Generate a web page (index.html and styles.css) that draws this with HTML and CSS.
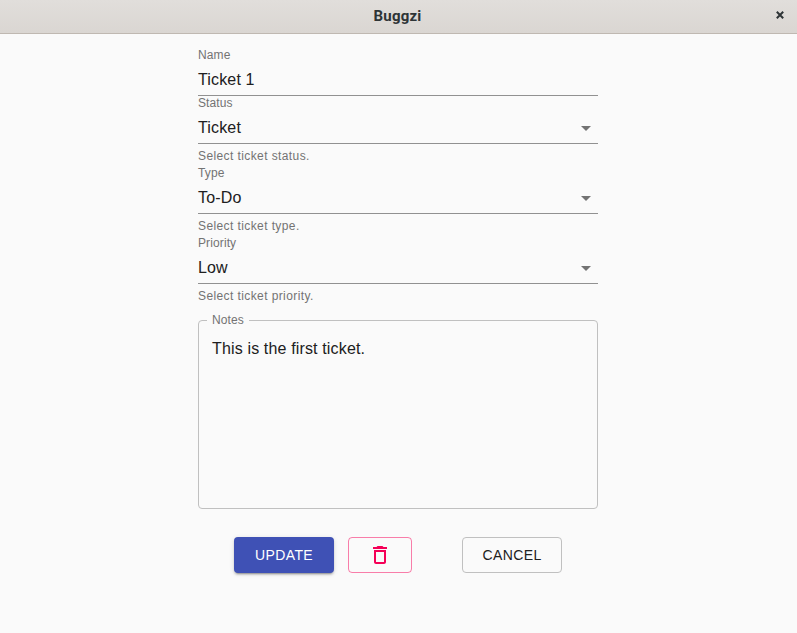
FILE: index.html
```html
<!DOCTYPE html>
<html lang="en">
<head>
<meta charset="utf-8">
<title>Buggzi</title>
<link rel="stylesheet" href="styles.css">
</head>
<body>
<header class="titlebar">
  <h1 class="title">Buggzi</h1>
  <button class="close" aria-label="Close"><svg width="8" height="8" viewBox="0 0 8 8"><path d="M.8.8l6.400 6.400M7.200.8L.8 7.200" stroke="#2e3436" stroke-width="2"/></svg></button>
</header>
<main class="form">
  <div class="field">
    <span class="label">Name</span>
    <div class="value">Ticket 1</div>
  </div>
  <div class="field">
    <span class="label">Status</span>
    <div class="value">Ticket<svg class="arrow" viewBox="0 0 24 24"><path d="M7 10l5 5 5-5z"/></svg></div>
    <p class="help">Select ticket status.</p>
  </div>
  <div class="field">
    <span class="label">Type</span>
    <div class="value">To-Do<svg class="arrow" viewBox="0 0 24 24"><path d="M7 10l5 5 5-5z"/></svg></div>
    <p class="help">Select ticket type.</p>
  </div>
  <div class="field">
    <span class="label">Priority</span>
    <div class="value">Low<svg class="arrow" viewBox="0 0 24 24"><path d="M7 10l5 5 5-5z"/></svg></div>
    <p class="help">Select ticket priority.</p>
  </div>
  <fieldset class="notes">
    <legend class="legend">Notes</legend>
    <div class="text">This is the first ticket.</div>
  </fieldset>
  <div class="actions">
    <button class="btn primary">UPDATE</button>
    <button class="btn delete" aria-label="Delete"><svg width="24" height="24" viewBox="0 0 24 24"><path d="M6 19c0 1.100.9 2 2 2h8c1.100 0 2-.9 2-2V7H6v12zM8 9h8v10H8V9zm7.500-5l-1-1h-5l-1 1H5v2h14V4z"/></svg></button>
    <button class="btn cancel">CANCEL</button>
  </div>
</main>
</body>
</html>
```
FILE: styles.css
```css
* { box-sizing: border-box; }
body {
  margin: 0;
  height: 633px;
  overflow: hidden;
  background: #fafafa;
  color: #202020;
  font-family: "Liberation Sans", Arial, sans-serif;
}
button { font-family: inherit; margin: 0; padding: 0; }
.titlebar {
  display: grid;
  grid-template-columns: 34px 1fr 34px;
  align-items: center;
  height: 34px;
  background: linear-gradient(#e1dedb, #dad6d2);
  border-bottom: 1px solid #bfb8b1;
}
.title {
  grid-column: 2;
  margin: 0 2px 1px 0;
  text-align: center;
  font: bold 15px/30px Roboto, sans-serif;
  letter-spacing: .2px;
  color: #2e3436;
}
.close { display: flex; justify-content: center; border: 0; background: none; padding-bottom: 3px; }
.form { width: 400px; margin: 14px 0 0 198px; }
.field { display: flow-root; }
.label {
  display: block;
  height: 16px;
  font-size: 12px;
  line-height: 14px;
  letter-spacing: .11px;
  color: #737373;
}
.value {
  display: flex;
  justify-content: space-between;
  height: 32px;
  border-bottom: 1px solid #919191;
  font-size: 16px;
  line-height: 31px;
  letter-spacing: .15px;
}
.arrow { width: 24px; height: 24px; margin-top: 4px; fill: #737373; }
.help {
  height: 19px;
  margin: 3px 0 0;
  font-size: 12px;
  line-height: 18px;
  letter-spacing: .4px;
  color: #737373;
}
.notes {
  height: 196px;
  min-width: 0;
  margin: 7px 0 0;
  padding: 0 13px 0 8px;
  border: 1px solid #c0c0c0;
  border-radius: 4px;
}
.legend {
  height: 14px;
  padding: 0 5px;
  font-size: 12px;
  line-height: 14px;
  letter-spacing: .11px;
  color: #737373;
}
.text { padding: 12px 5px; font-size: 16px; line-height: 19px; letter-spacing: .15px; }
.actions { display: flex; margin: 28px 0 0 36px; }
.btn {
  display: flex;
  align-items: center;
  justify-content: center;
  width: 100px;
  height: 36px;
  border: 1px solid #c0c0c0;
  border-radius: 4px;
  background: none;
  color: #202020;
  font-size: 14px;
  letter-spacing: .4px;
}
.primary {
  border: 0;
  background: #3f51b5;
  color: #fff;
  box-shadow: 0 3px 1px -2px rgba(0,0,0,.2), 0 2px 2px rgba(0,0,0,.14), 0 1px 5px rgba(0,0,0,.12);
}
.delete { width: 64px; margin: 0 50px 0 14px; border-color: rgba(245, 0, 87, .5); }
.delete svg { fill: #f50057; }
```
